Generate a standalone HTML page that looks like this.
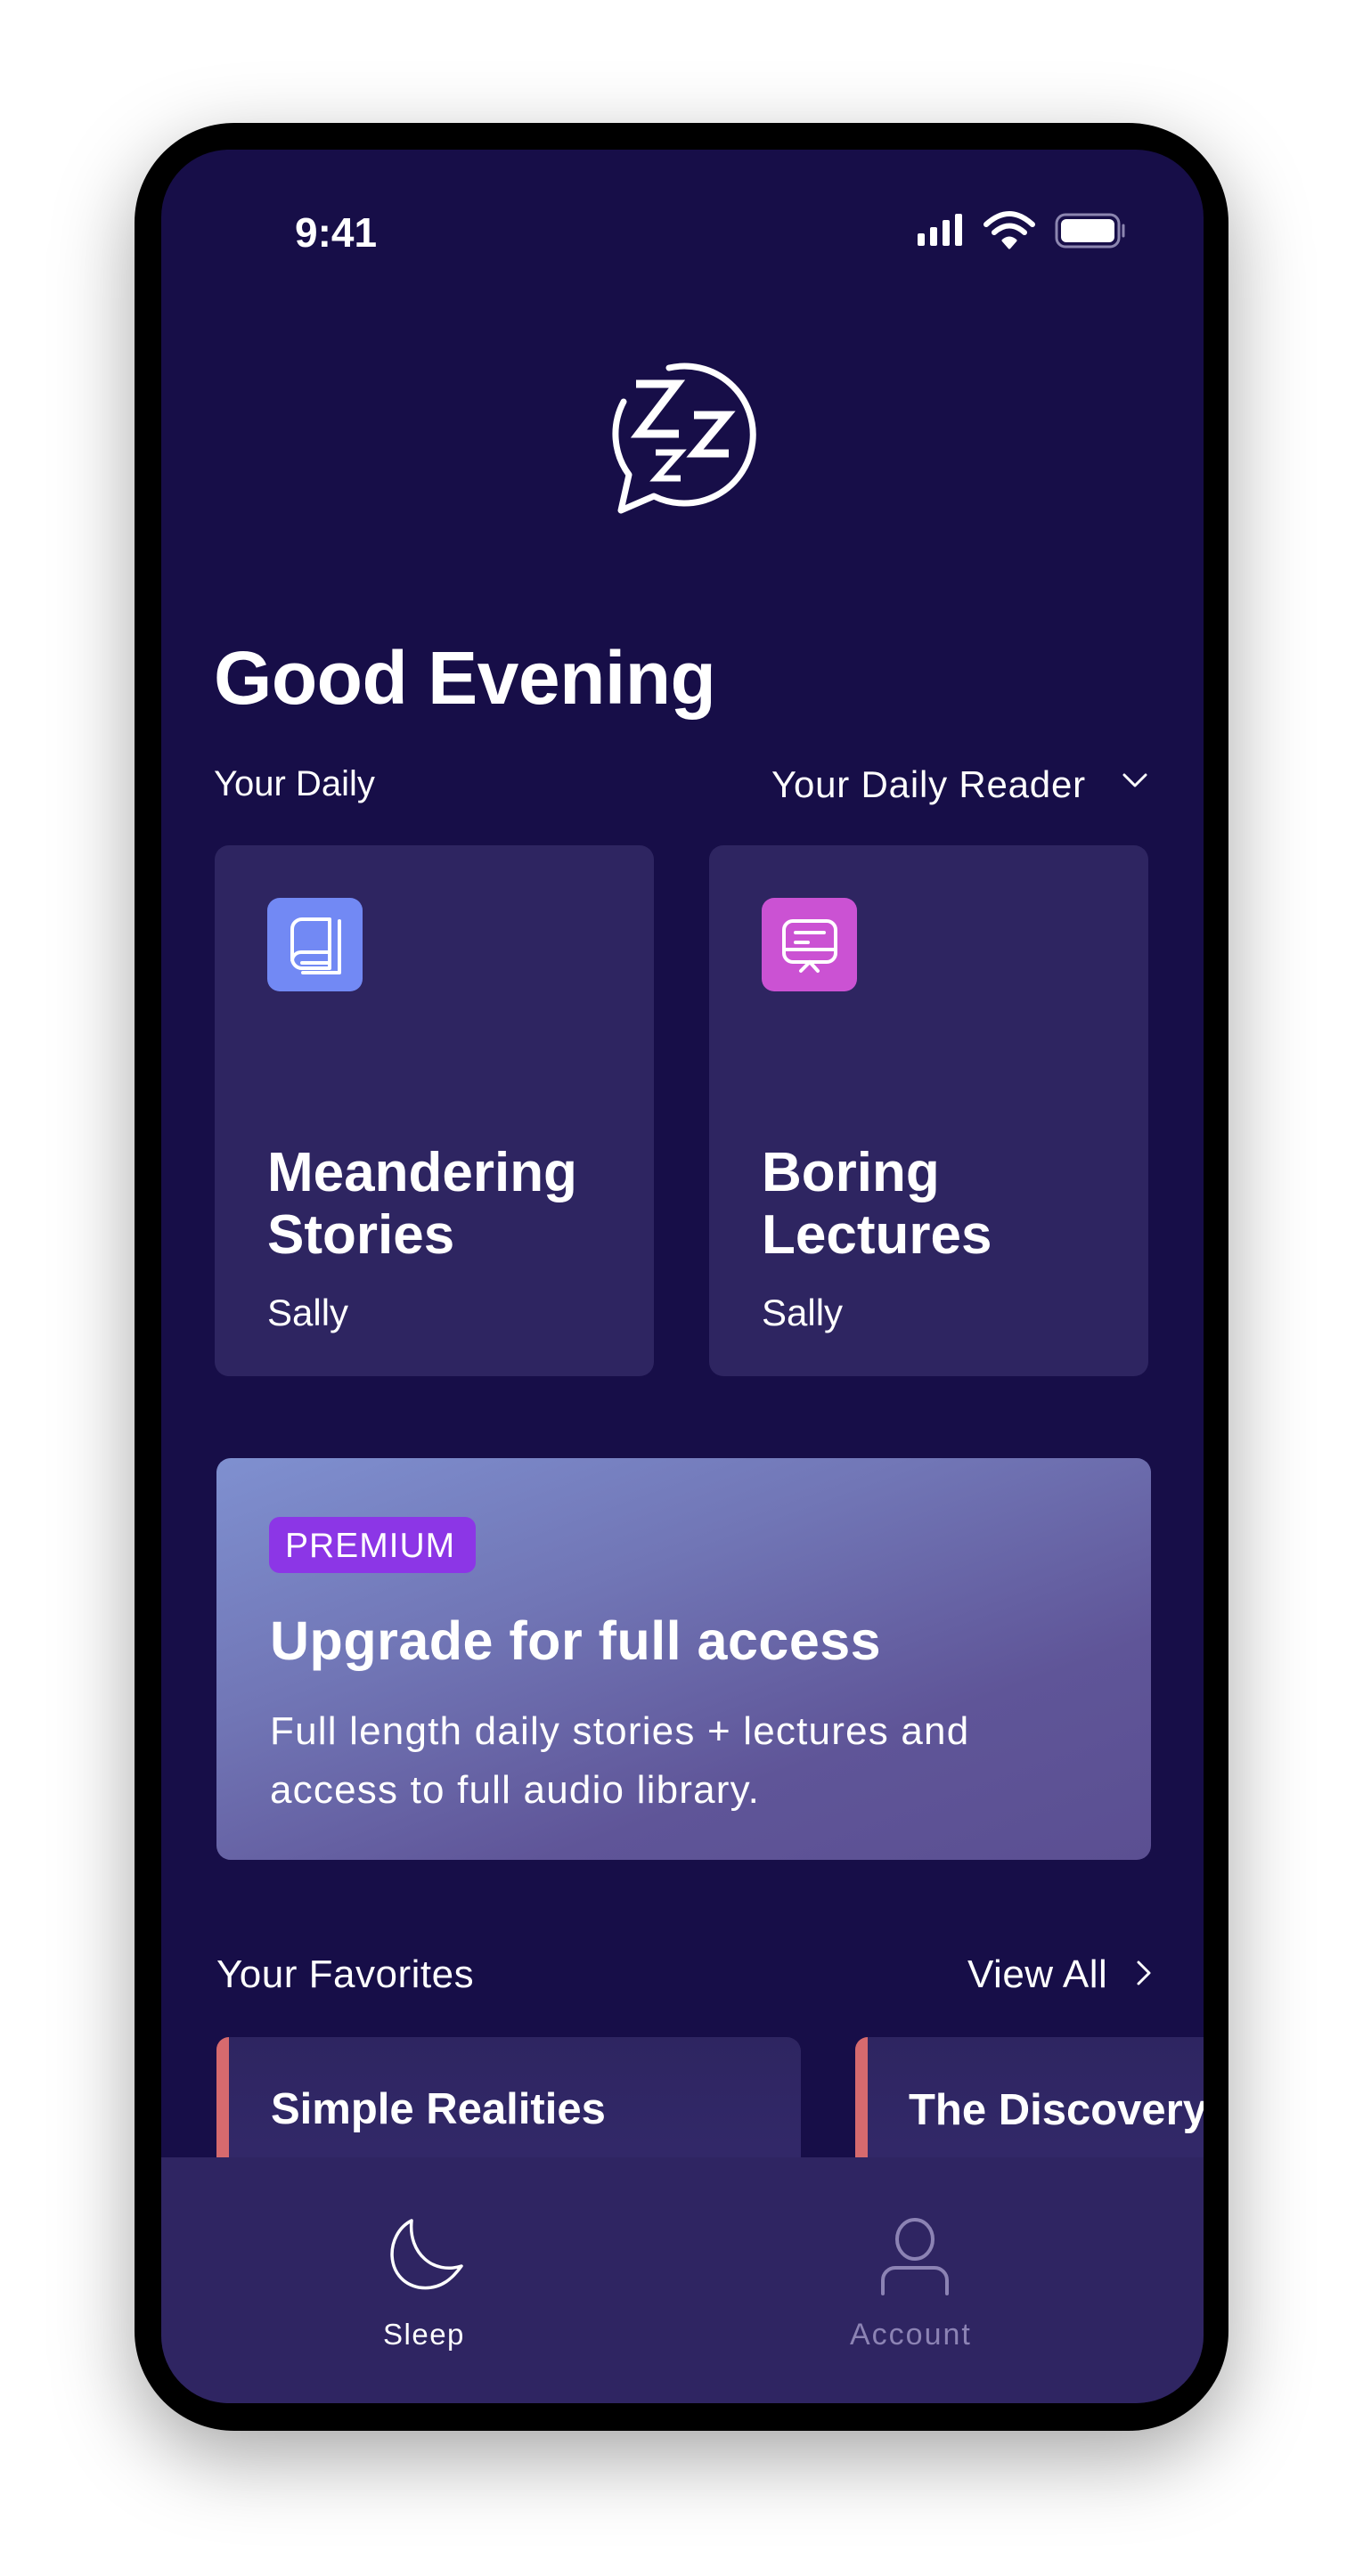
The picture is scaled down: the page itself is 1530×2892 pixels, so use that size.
<!DOCTYPE html>
<html><head><meta charset="utf-8"><style>
*{margin:0;padding:0;box-sizing:border-box}
body{width:1530px;height:2892px;background:#fff;position:relative;overflow:hidden;font-family:"Liberation Sans",sans-serif;color:#fff}
.a{position:absolute;line-height:1;white-space:nowrap}
.phone{position:absolute;left:151px;top:138px;width:1228px;height:2591px;background:#000;border-radius:112px;box-shadow:0 30px 90px rgba(0,0,0,.35)}
.screen{position:absolute;left:181px;top:168px;width:1170px;height:2530px;background:#170e48;border-radius:76px;overflow:hidden}
.card{position:absolute;background:#2e2561;border-radius:16px}
.b{font-weight:bold}
</style></head><body>
<div class="phone"></div>
<div class="screen">
  <div class="card" style="left:60px;top:781px;width:493px;height:596px"></div>
  <div class="card" style="left:615px;top:781px;width:493px;height:596px"></div>
  <div style="position:absolute;left:119px;top:840px;width:107px;height:105px;border-radius:14px;background:#7289f4"></div>
  <div style="position:absolute;left:674px;top:840px;width:107px;height:105px;border-radius:14px;background:#cb52d3"></div>
  <div style="position:absolute;left:62px;top:1469px;width:1049px;height:451px;border-radius:16px;background:linear-gradient(160deg,#7f90d0 0%,#7176b6 35%,#5f5598 70%,#5b4f92 100%)"></div>
  <div style="position:absolute;left:121px;top:1535px;width:232px;height:63px;border-radius:12px;background:#8c36e6"></div>
  <div class="card" style="left:62px;top:2119px;width:656px;height:200px;border-radius:16px;background:linear-gradient(180deg,#2e2561,#342a6c)"></div>
  <div style="position:absolute;left:62px;top:2119px;width:14px;height:200px;border-radius:14px 0 0 0;background:#d66a6e"></div>
  <div class="card" style="left:779px;top:2119px;width:500px;height:200px;border-radius:16px;background:linear-gradient(180deg,#2e2561,#342a6c)"></div>
  <div style="position:absolute;left:779px;top:2119px;width:14px;height:200px;border-radius:14px 0 0 0;background:#d66a6e"></div>
  <div class="a b" style="left:839px;top:2177px;font-size:49px">The Discovery</div>
  <div style="position:absolute;left:0;top:2254px;width:1170px;height:276px;background:#2f2562"></div>
</div>

<div class="a" style="left:331px;top:238px;font-size:46px;font-weight:bold">9:41</div>
<div class="a b" style="left:240px;top:719px;font-size:84px;letter-spacing:-0.5px">Good Evening</div>
<div class="a" style="left:240px;top:860px;font-size:40px">Your Daily</div>
<div class="a" style="left:866px;top:860px;font-size:42px;letter-spacing:0.8px">Your Daily Reader</div>
<div class="a b" style="left:300px;top:1286px;font-size:62px">Meandering</div>
<div class="a b" style="left:300px;top:1356px;font-size:62px">Stories</div>
<div class="a" style="left:300px;top:1453px;font-size:42px">Sally</div>
<div class="a b" style="left:855px;top:1286px;font-size:62px">Boring</div>
<div class="a b" style="left:855px;top:1356px;font-size:62px">Lectures</div>
<div class="a" style="left:855px;top:1453px;font-size:42px">Sally</div>
<div class="a" style="left:320px;top:1716px;font-size:39px;letter-spacing:1px">PREMIUM</div>
<div class="a b" style="left:303px;top:1812px;font-size:61px;letter-spacing:0.5px">Upgrade for full access</div>
<div class="a" style="left:303px;top:1922px;font-size:44px;letter-spacing:1.2px">Full length daily stories + lectures and</div>
<div class="a" style="left:303px;top:1988px;font-size:44px;letter-spacing:1.2px">access to full audio library.</div>
<div class="a" style="left:243px;top:2195px;font-size:44px;letter-spacing:0.5px">Your Favorites</div>
<div class="a" style="left:1086px;top:2195px;font-size:44px;letter-spacing:0.5px">View All</div>
<div class="a b" style="left:304px;top:2344px;font-size:49px">Simple Realities</div>
<div class="a" style="left:430px;top:2604px;font-size:33px;letter-spacing:1.5px">Sleep</div>
<div class="a" style="left:954px;top:2604px;font-size:34px;letter-spacing:2px;color:#8c83b4">Account</div>

<svg width="1530" height="2892" style="position:absolute;left:0;top:0" fill="none" stroke="#fff" stroke-linecap="round" stroke-linejoin="round">
  <g fill="#fff" stroke="none">
    <rect x="1030" y="262" width="8" height="14" rx="2"/>
    <rect x="1044" y="255" width="8" height="21" rx="2"/>
    <rect x="1058" y="247" width="8" height="29" rx="2"/>
    <rect x="1072" y="240" width="8" height="36" rx="2"/>
  </g>
  <path d="M1107 252 Q1133 228 1159 252" stroke-width="6"/>
  <path d="M1116 261 Q1133 246 1150 261" stroke-width="6"/>
  <path d="M1126 270 L1133 278 L1140 270 Q1133 264 1126 270Z" fill="#fff" stroke-width="3"/>
  <rect x="1186" y="241" width="70" height="36" rx="10" stroke="#8c86b0" stroke-width="3"/>
  <rect x="1191" y="246" width="60" height="26" rx="6" fill="#fff" stroke="none"/>
  <path d="M1261 253 v12" stroke="#8c86b0" stroke-width="3"/>
  <path d="M751 413 A77 77 0 1 1 734 557 L697 573 L706 533 A77 77 0 0 1 700 451" stroke-width="7"/>
  <path d="M714 431 H760 L717 487 H762" stroke-width="9" stroke-linecap="butt" stroke-linejoin="miter"/>
  <path d="M779 466 H816 L780 509 H818" stroke-width="9" stroke-linecap="butt" stroke-linejoin="miter"/>
  <path d="M736 508 H763 L737 537 H764" stroke-width="7" stroke-linecap="butt" stroke-linejoin="miter"/>
  <path d="M1262 870 L1274 882 L1286 870" stroke-width="3"/>
  <path d="M1278 2203 L1290 2215 L1278 2227" stroke-width="3"/>
  <path d="M339 1032 H370 V1087 H339 A11 11 0 0 1 328 1076 V1043 A11 11 0 0 1 339 1032Z M328 1078 A10 10 0 0 1 338 1069 H370 M381 1034 V1092 H340 M339 1081 H369" stroke-width="4"/>
  <path d="M890 1034 H928 A10 10 0 0 1 938 1044 V1070 A10 10 0 0 1 928 1080 H890 A10 10 0 0 1 880 1070 V1044 A10 10 0 0 1 890 1034Z M880 1066 H938 M893 1047 H925 M893 1058 H907 M909 1080 L899 1090 M909 1080 L918 1090" stroke-width="4"/>
  <path d="M462 2493 C432 2508 431 2560 470 2568 C496 2572 510 2555 518 2544 C487 2554 458 2530 462 2493Z" stroke-width="3.5"/>
  <ellipse cx="1027" cy="2514" rx="20" ry="22" stroke="#8c83b4" stroke-width="4"/>
  <path d="M991 2575 V2560 A14 14 0 0 1 1005 2546 H1049 A14 14 0 0 1 1063 2560 V2575" stroke="#8c83b4" stroke-width="4"/>
</svg>
</body></html>
